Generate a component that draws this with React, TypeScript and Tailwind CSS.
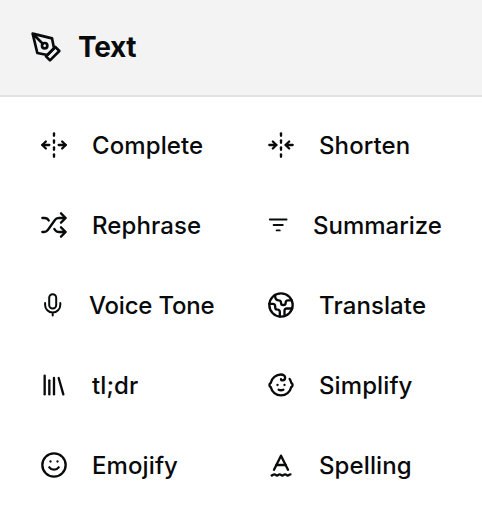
import type { ReactNode } from 'react';
import {
  Baby,
  Earth,
  FoldHorizontal,
  Library,
  Smile,
  SpellCheck2,
  UnfoldHorizontal,
} from 'lucide-react';

interface ActionProps {
  icon: ReactNode;
  label: string;
  className?: string;
}

function Action({ icon, label, className = 'tracking-[0.1px]' }: ActionProps) {
  return (
    <button className={`flex h-20 items-center gap-6 text-left text-2xl font-medium ${className}`}>
      {icon}
      <span className="mt-0.5 whitespace-nowrap">{label}</span>
    </button>
  );
}

function PenIcon() {
  return (
    <svg viewBox="0 0 24 24" fill="none" stroke="currentColor" strokeWidth="2" strokeLinecap="round" strokeLinejoin="round" className="size-8 shrink-0">
      <path d="m12 19 7-7 3 3-7 7-3-3z" />
      <path d="m18 13-1.5-7.5L2 2l3.5 14.5L13 18l5-5zM2 2l7.586 7.586" />
      <circle cx="11" cy="11" r="2" />
    </svg>
  );
}

function ShuffleIcon() {
  return (
    <svg viewBox="0 0 24 24" fill="none" stroke="currentColor" strokeWidth="2" strokeLinecap="round" strokeLinejoin="round" className="size-7 shrink-0">
      <path d="M2 18h1.4c1.3 0 2.5-.6 3.3-1.7l6.1-8.6c.7-1.1 2-1.7 3.3-1.7H22M18 2l4 4-4 4" />
      <path d="M2 6h1.9c1.5 0 2.9.9 3.6 2.2M22 18h-5.9c-1.3 0-2.6-.7-3.3-1.8l-.5-.8M18 14l4 4-4 4" />
    </svg>
  );
}

function LinesIcon() {
  return (
    <svg viewBox="0 0 22 22" fill="none" stroke="currentColor" strokeWidth="1.8" strokeLinecap="round" className="h-[22px] w-[22px] shrink-0">
      <path d="M2.8 5.5h16.8M6.6 11h9.2M9.6 16.4h3.2" />
    </svg>
  );
}

function MicIcon() {
  return (
    <svg viewBox="0 0 25 26" fill="none" stroke="currentColor" strokeWidth="2" strokeLinecap="round" className="h-[26px] w-[25px] shrink-0">
      <rect x="9.2" y="2.3" width="7" height="14.2" rx="3.5" />
      <path d="M5.1 11v1.9a7.6 7.6 0 0 0 15.2 0V11M12.7 20.5v3" />
    </svg>
  );
}

export default function App() {
  return (
    <div className="h-[522px] w-[482px] bg-white font-['Inter',sans-serif] text-[#090a0b]">
      <header className="flex h-[97px] items-center gap-4 border-b-2 border-[#e2e2e2] bg-[#f3f3f3] pb-px pl-[30px]">
        <PenIcon />
        <h1 className="text-[28px] font-bold tracking-[-0.3px]">Text</h1>
      </header>
      <div className="grid grid-cols-[227px_1fr] pt-2 pl-10">
        <Action icon={<UnfoldHorizontal className="size-7" />} label="Complete" />
        <Action icon={<FoldHorizontal className="size-7" />} label="Shorten" />
        <Action icon={<ShuffleIcon />} label="Rephrase" />
        <Action icon={<LinesIcon />} label="Summarize" className="tracking-normal" />
        <Action icon={<MicIcon />} label="Voice Tone" className="tracking-[-0.2px]" />
        <Action icon={<Earth className="size-7" />} label="Translate" />
        <Action icon={<Library className="size-7" />} label="tl;dr" />
        <Action icon={<Baby className="size-7" />} label="Simplify" />
        <Action icon={<Smile className="size-7" />} label="Emojify" />
        <Action icon={<SpellCheck2 className="size-7" />} label="Spelling" />
      </div>
    </div>
  );
}
